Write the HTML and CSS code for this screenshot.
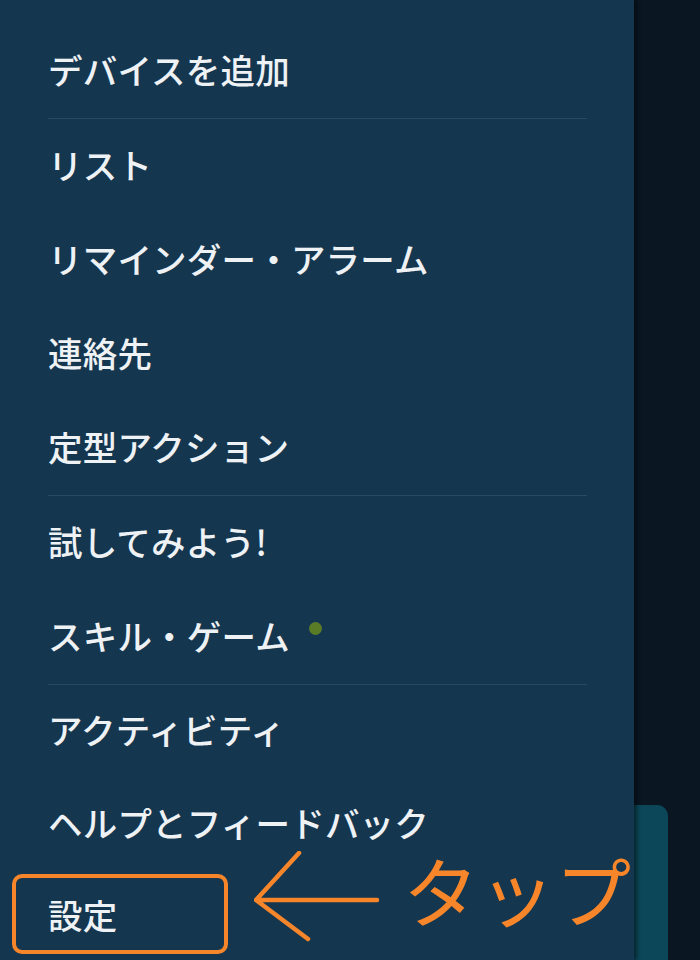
FILE: index.html
```html
<!DOCTYPE html>
<html lang="ja">
<head>
<meta charset="utf-8">
<title>メニュー</title>
<link rel="stylesheet" href="styles.css">
</head>
<body>
<div class="screen">
  <nav class="drawer">
    <ul class="group">
      <li class="item">デバイスを追加</li>
    </ul>
    <ul class="group">
      <li class="item">リスト</li>
      <li class="item">リマインダー・アラーム</li>
      <li class="item">連絡先</li>
      <li class="item">定型アクション</li>
    </ul>
    <ul class="group">
      <li class="item">試してみよう!</li>
      <li class="item">スキル・ゲーム<span class="dot"></span></li>
    </ul>
    <ul class="group last">
      <li class="item">アクティビティ</li>
      <li class="item">ヘルプとフィードバック</li>
      <li class="item">設定</li>
    </ul>
  </nav>
  <div class="backdrop">
    <div class="card"></div>
  </div>

  <div class="annotation">
    <div class="highlight"></div>
    <svg class="arrow" width="130" height="92" viewBox="0 0 130 92">
      <path d="M45 2 L2 49 L54 88 M2 49 L123 49" fill="none" stroke="#f7862a" stroke-width="4.5" stroke-linecap="round" stroke-linejoin="round"/>
    </svg>
    <span class="tap">タップ</span>
  </div>
</div>
</body>
</html>
```

FILE: styles.css
```css
* { box-sizing: border-box; }
html, body {
  margin: 0;
  padding: 0;
  background: #0a1622;
}
.screen {
  position: relative;
  width: 700px;
  height: 960px;
  overflow: hidden;
  display: flex;
  font-family: "Noto Sans CJK JP", "Noto Sans", sans-serif;
}
.drawer {
  width: 634px;
  flex: none;
  background: #15364f;
  padding: 24px 47px 0 48px;
  box-shadow: 3px 0 4px rgba(0, 0, 0, 0.45);
  position: relative;
  z-index: 1;
}
.group {
  list-style: none;
  margin: 0;
  padding: 0;
  border-bottom: 1px solid #2b4a62;
}
.group.last { border-bottom: none; }
.item {
  height: 94px;
  padding-bottom: 4px;
  display: flex;
  align-items: center;
  color: #eef2f5;
  font-size: 34.5px;
  font-weight: 500;
  letter-spacing: 0.2px;
}
.group.last .item { height: 92.5px; }
.dot {
  width: 13px;
  height: 13px;
  border-radius: 50%;
  background: #5b7c26;
  margin-left: 19px;
  margin-top: -14px;
}
.backdrop {
  flex: 1;
  background: #0a1622;
  display: flex;
  flex-direction: column;
}
.card {
  margin-top: 805px;
  width: 34px;
  flex: 1;
  background: #0b4758;
  border-top-right-radius: 11px;
}
.annotation {
  position: absolute;
  left: 0;
  top: 0;
  width: 700px;
  height: 960px;
  z-index: 2;
  pointer-events: none;
}
.highlight {
  position: absolute;
  left: 12px;
  top: 874px;
  width: 216px;
  height: 80px;
  border: 4px solid #f7862a;
  border-radius: 10px;
}
.arrow {
  position: absolute;
  left: 254px;
  top: 851px;
}
.tap {
  position: absolute;
  left: 403px;
  top: 851px;
  color: #f7862a;
  font-size: 76px;
  font-weight: 400;
  line-height: 1;
  letter-spacing: 0;
}
```
